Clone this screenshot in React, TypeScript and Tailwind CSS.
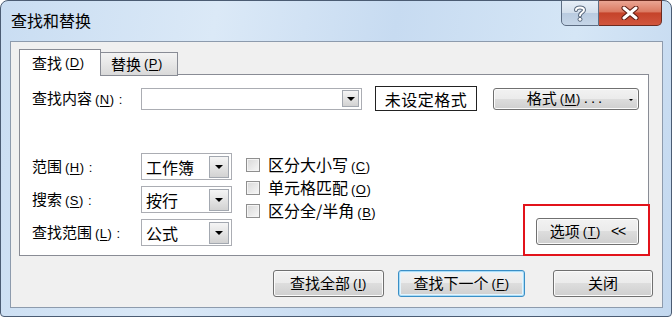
import React from "react";

const cjk = "font-['Noto_Sans_CJK_SC','Liberation_Sans',sans-serif]";

function Mn({ k, colon }: { k: string; colon?: boolean }) {
  return (
    <span className="font-['Liberation_Sans',sans-serif] text-[13px] ml-[3px] tracking-[0.5px]">
      (<span className="underline underline-offset-2">{k}</span>){colon ? " :" : ""}
    </span>
  );
}

function Arrow({ w = 19, h = 21 }: { w?: number; h?: number }) {
  return (
    <div
      className="border border-[#a3a8b0] bg-[linear-gradient(#f5f5f5,#e4e4e4_50%,#d2d2d2)] flex items-center justify-center"
      style={{ width: w, height: h }}
    >
      <div className="w-0 h-0 border-l-[4px] border-r-[4px] border-t-[4px] border-l-transparent border-r-transparent border-t-black" />
    </div>
  );
}

function Select({ value }: { value: string }) {
  return (
    <div className="w-[91px] h-[27px] border border-[#abadb3] bg-white flex items-center justify-between pl-[4px] pr-[2px]">
      <span className="text-[16px] leading-none">{value}</span>
      <Arrow w={20} h={22} />
    </div>
  );
}

function Check({ children }: { children: React.ReactNode }) {
  return (
    <div className="h-[23px] flex items-center gap-[8px]">
      <div className="w-[14px] h-[14px] border border-[#8f8f8f] bg-[linear-gradient(135deg,#d8d8d8,#f7f7f7)] shadow-[inset_0_0_0_1px_#f4f4f4]" />
      <span className="text-[16px] leading-none">{children}</span>
    </div>
  );
}

const btn =
  "h-[27px] flex items-center justify-center rounded-[3px] border border-[#707070] bg-[linear-gradient(#f2f2f2_0%,#ebebeb_49%,#dddddd_50%,#cfcfcf_100%)] shadow-[inset_0_0_0_1px_#fbfbfb] text-[15px]";

export default function App() {
  return (
    <div className={`w-[672px] h-[317px] bg-white text-black ${cjk}`}>
      <div className="h-full rounded-t-[8px] rounded-b-[4px] border border-[#4b5c73] bg-[linear-gradient(100deg,#c9ddf2_0%,#dbe9f7_30%,#c7dbf1_55%,#d5e6f6_80%,#c3d8ef_100%)] flex flex-col">
        {/* title bar */}
        <div className="h-[40px] flex items-start justify-between pl-[10px]">
          <div className="pt-[9px] text-[16px] leading-[20px]">查找和替换</div>
          <div className="flex -mt-px mr-[9px]">
            <div className="w-[38px] h-[26px] rounded-bl-[5px] border border-[#5d6d83] bg-[linear-gradient(#e6eef7,#d3dfec_50%,#b9cbe0_51%,#c6d6e8)] flex items-center justify-center">
              <svg width="14" height="18" viewBox="0 0 14 18">
                <path
                  d="M3 6 C3 2.5 11 2.5 11 6 C11 8.5 7 8.5 7 11.5"
                  fill="none"
                  stroke="#55657a"
                  strokeWidth="4"
                  strokeLinecap="round"
                />
                <path
                  d="M3 6 C3 2.5 11 2.5 11 6 C11 8.5 7 8.5 7 11.5"
                  fill="none"
                  stroke="#ffffff"
                  strokeWidth="2"
                  strokeLinecap="round"
                />
                <circle cx="7" cy="15.3" r="2" fill="#ffffff" stroke="#55657a" strokeWidth="1" />
              </svg>
            </div>
            <div className="w-[63px] h-[26px] rounded-br-[5px] border border-l-0 border-[#6b2b20] bg-[linear-gradient(#eaa593,#db7a62_45%,#c5432a_50%,#d1563e)] flex items-center justify-center">
              <svg width="18" height="14" viewBox="0 0 18 14">
                <path d="M3 2 L15 12 M15 2 L3 12" stroke="#5a1a10" strokeWidth="5" strokeLinecap="round" />
                <path d="M3 2 L15 12 M15 2 L3 12" stroke="#ffffff" strokeWidth="3" strokeLinecap="round" />
              </svg>
            </div>
          </div>
        </div>

        {/* client area */}
        <div className="ml-[9px] mr-[8px] mb-[8px] flex-1 border border-[#8d9bad] bg-[#f0f0f0] flex flex-col pt-[7px] pl-[8px] pr-[13px]">
          {/* tabs */}
          <div className="flex items-start h-[26px] relative z-10 -mb-px">
            <div className="w-[82px] h-[27px] border border-b-0 border-[#898c95] bg-white flex items-center pl-[12px] text-[15px]">
              查找<Mn k="D" />
            </div>
            <div className="w-[77px] h-[24px] mt-[3px] border border-l-0 border-[#898c95] bg-[linear-gradient(#f3f3f3,#e7e7e7_50%,#d9d9d9)] flex items-center pl-[10px] text-[15px]">
              替换<Mn k="P" />
            </div>
          </div>

          {/* panel */}
          <div className="h-[182px] border border-[#898c95] bg-white flex flex-col pl-[12px] pr-[9px] pt-[11px]">
            <div className="h-[25px] flex items-center">
              <div className="w-[109px] text-[15px]">
                查找内容<Mn k="N" colon />
              </div>
              <div className="w-[221px] h-[22px] border border-[#abadb3] bg-white flex items-center justify-end pr-[2px]">
                <Arrow w={17} h={17} />
              </div>
              <div className="ml-[13px] w-[102px] h-[25px] border-[1.5px] border-[#222] flex items-center justify-center text-[16px] tracking-[0.5px]">
                未设定格式
              </div>
              <div className={`ml-auto w-[146px] !h-[22px] ${btn} relative`}>
                格式<Mn k="M" />
                <span className="font-['Liberation_Sans',sans-serif] tracking-[3px] ml-[3px]">...</span>
                <div className="absolute right-[5px] top-[10px] w-0 h-0 border-l-[2px] border-r-[2px] border-t-[2px] border-l-transparent border-r-transparent border-t-black" />
              </div>
            </div>

            <div className="mt-[41px] flex items-end justify-between flex-1">
              <div className="flex pb-[9px]">
                <div className="flex flex-col gap-[6px]">
                  {[
                    ["范围", "H", "工作簿"],
                    ["搜索", "S", "按行"],
                    ["查找范围", "L", "公式"],
                  ].map(([l, k, v]) => (
                    <div key={k} className="flex items-center">
                      <div className="w-[109px] text-[15px]">
                        {l}
                        <Mn k={k} colon />
                      </div>
                      <Select value={v} />
                    </div>
                  ))}
                </div>
                <div className="ml-[14px] flex flex-col">
                  <Check>
                    区分大小写<Mn k="C" />
                  </Check>
                  <Check>
                    单元格匹配<Mn k="O" />
                  </Check>
                  <Check>
                    区分全/半角<Mn k="B" />
                  </Check>
                </div>
              </div>
              <div className="w-[127px] h-[52px] border-2 border-[#e2131b] -mr-[11px] -mb-px flex items-end justify-end pr-[9px] pb-[9px]">
                <div className={`w-[103px] ${btn}`}>
                  选项<Mn k="T" />
                  <span className="ml-[10px] font-['Liberation_Sans',sans-serif] text-[14px] tracking-[-1px]">&lt;&lt;</span>
                </div>
              </div>
            </div>
          </div>

          {/* bottom buttons */}
          <div className="mt-[14px] flex justify-end -mr-[4px]">
            <div className={`w-[111px] ${btn}`}>
              查找全部<Mn k="I" />
            </div>
            <div className={`ml-[14px] w-[127px] ${btn} !border-[#3a8fc6] !shadow-[inset_0_0_0_1px_#a9dcf7,inset_0_0_0_2px_#e4f4fd]`}>
              查找下一个<Mn k="F" />
            </div>
            <div className={`ml-[28px] w-[100px] ${btn}`}>关闭</div>
          </div>
        </div>
      </div>
    </div>
  );
}
